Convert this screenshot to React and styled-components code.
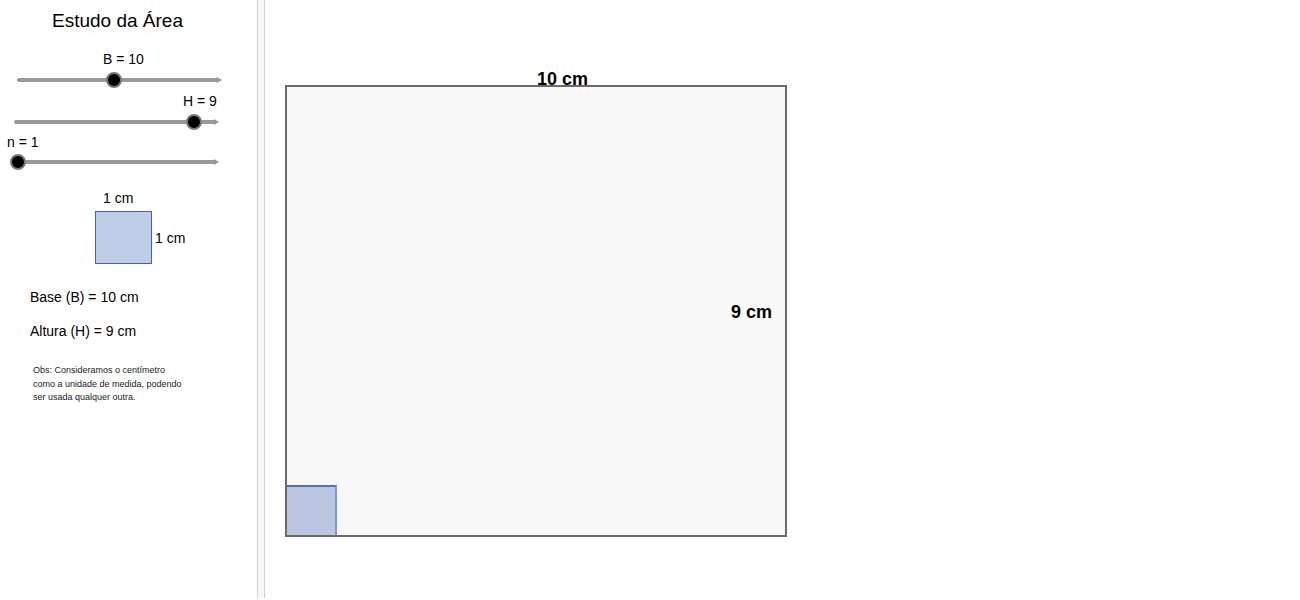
import React from "react";
import styled, { createGlobalStyle } from "styled-components";

const GlobalStyle = createGlobalStyle`
  html, body {
    margin: 0;
    padding: 0;
    background: #ffffff;
  }
  body {
    font-family: "Liberation Sans", Arial, sans-serif;
    color: #000;
  }
`;

function Slider({ label, labelLeft, left, width, knob, gapTop, gapMid }) {
  return (
    <SliderBlock $gap={gapTop}>
      <SliderLabel $left={labelLeft}>{label}</SliderLabel>
      <TrackArea $left={left} $width={width} $gap={gapMid}>
        <Track />
        <Knob style={{ left: knob - left }} />
      </TrackArea>
    </SliderBlock>
  );
}

function App() {
  return (
    <>
      <GlobalStyle />
      <Applet>
        <SidePanel>
          <Title>Estudo da Área</Title>
          <Slider label="B = 10" labelLeft={103} left={17} width={201} knob={114} gapTop={19} gapMid={5} />
          <Slider label="H = 9" labelLeft={183} left={14} width={201} knob={194} gapTop={5} gapMid={5} />
          <Slider label="n = 1" labelLeft={7} left={12} width={203} knob={18} gapTop={4} gapMid={4} />

          <UnitBlock>
            <UnitTopLabel>1 cm</UnitTopLabel>
            <UnitRow>
              <UnitSquare />
              <UnitSideLabel>1 cm</UnitSideLabel>
            </UnitRow>
          </UnitBlock>

          <Info $gap={25}>Base (B) = 10 cm</Info>
          <Info $gap={18}>Altura (H) = 9 cm</Info>

          <Note>
            Obs: Consideramos o centímetro
            <br />
            como a unidade de medida, podendo
            <br />
            ser usada qualquer outra.
          </Note>
        </SidePanel>

        <Divider />

        <Graphics>
          <Rectangle>
            <TopLabel>10 cm</TopLabel>
            <SideLabel>9 cm</SideLabel>
            <Tile />
          </Rectangle>
        </Graphics>
      </Applet>
    </>
  );
}

export default App;

const Applet = styled.div`
  display: flex;
  width: 1300px;
  height: 598px;
  overflow: hidden;
`;

const SidePanel = styled.div`
  width: 257px;
  flex-shrink: 0;
  display: flex;
  flex-direction: column;
  align-items: flex-start;
  padding-top: 10px;
  box-sizing: border-box;
`;

const Title = styled.div`
  margin-left: 52px;
  font-size: 19px;
  line-height: 22px;
`;

const SliderBlock = styled.div`
  display: flex;
  flex-direction: column;
  align-items: flex-start;
  margin-top: ${(p) => p.$gap}px;
`;

const SliderLabel = styled.div`
  margin-left: ${(p) => p.$left}px;
  font-size: 14px;
  line-height: 16px;
`;

const TrackArea = styled.div`
  position: relative;
  margin-left: ${(p) => p.$left}px;
  margin-top: ${(p) => p.$gap}px;
  width: ${(p) => p.$width}px;
  height: 16px;
  display: flex;
  align-items: center;
`;

const Track = styled.div`
  position: relative;
  width: 100%;
  height: 4px;
  background: #999999;
  border-radius: 2px 0 0 2px;

  &::after {
    content: "";
    position: absolute;
    right: -4px;
    top: -1px;
    border-left: 5px solid #999999;
    border-top: 3px solid transparent;
    border-bottom: 3px solid transparent;
  }
`;

const Knob = styled.div`
  position: absolute;
  top: 0;
  width: 12px;
  height: 12px;
  margin-left: -8px;
  border: 2px solid #7a7a7a;
  border-radius: 50%;
  background: #000;
`;

const UnitBlock = styled.div`
  display: flex;
  flex-direction: column;
  align-items: flex-start;
  margin-top: 20px;
  margin-left: 95px;
`;

const UnitTopLabel = styled.div`
  margin-left: 8px;
  font-size: 14px;
  line-height: 16px;
`;

const UnitRow = styled.div`
  display: flex;
  align-items: center;
  margin-top: 5px;
`;

const UnitSquare = styled.div`
  width: 55px;
  height: 51px;
  background: #bfcce6;
  border: 1px solid #3f62b0;
`;

const UnitSideLabel = styled.div`
  margin-left: 3px;
  font-size: 14px;
  line-height: 16px;
`;

const Info = styled.div`
  margin-top: ${(p) => p.$gap}px;
  margin-left: 30px;
  font-size: 14px;
  line-height: 16px;
`;

const Note = styled.div`
  margin-top: 25px;
  margin-left: 33px;
  font-size: 9px;
  line-height: 13.5px;
  color: #222;
`;

const Divider = styled.div`
  width: 6px;
  flex-shrink: 0;
  background: #f8f8f8;
  border-left: 1px solid #d0d0d0;
  border-right: 1px solid #d0d0d0;
`;

const Graphics = styled.div`
  flex: 1;
  padding-top: 85px;
  padding-left: 20px;
`;

const Rectangle = styled.div`
  position: relative;
  width: 502px;
  height: 452px;
  background: #f8f8f8;
  border: 2px solid #6a6a6a;
  box-sizing: border-box;
  display: flex;
  flex-direction: column;
  justify-content: flex-end;
  align-items: flex-start;
`;

const TopLabel = styled.div`
  position: absolute;
  left: 250px;
  top: -19px;
  font-size: 18px;
  line-height: 22px;
  font-weight: 700;
`;

const SideLabel = styled.div`
  position: absolute;
  right: 13px;
  top: 214px;
  font-size: 18px;
  line-height: 22px;
  font-weight: 700;
`;

const Tile = styled.div`
  width: 50px;
  height: 50px;
  box-sizing: border-box;
  background: #bcc6e0;
  border-top: 2px solid #4f6fc0;
  border-right: 2px solid #7b97d8;
`;
